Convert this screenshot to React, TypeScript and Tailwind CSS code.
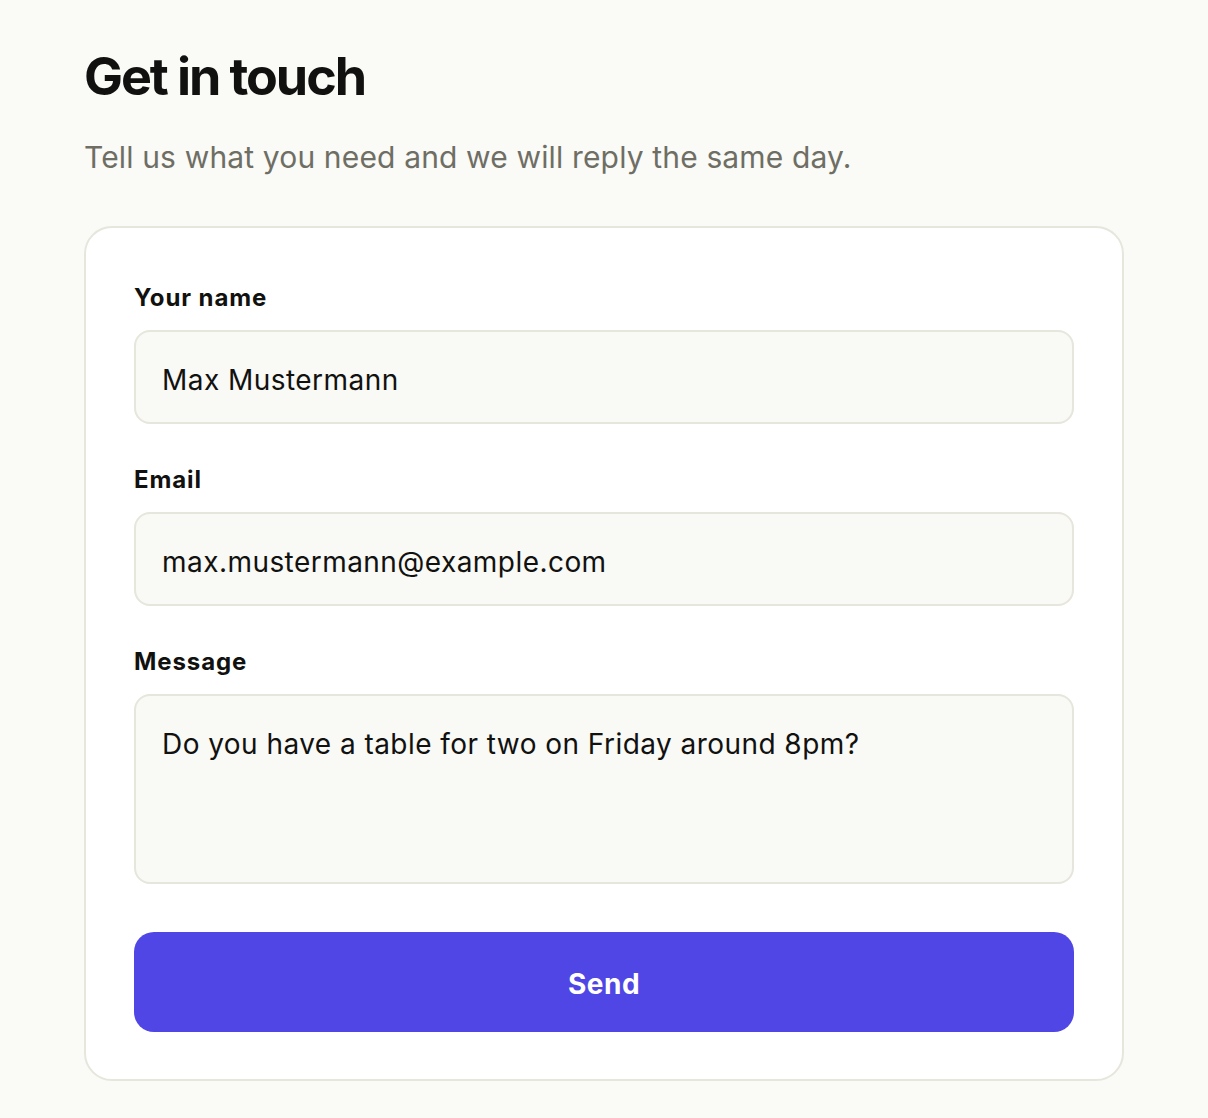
import { useState } from "react";

const fieldClass =
  "block w-full rounded-[16px] border-2 border-[#e6e6dd] bg-[#f9f9f5] px-[26px] pt-[27px] pb-[21px] text-[28px] leading-[42px] tracking-[0.45px] text-[#111110] outline-none";

const labelClass = "block text-[24px] font-bold leading-[40px] tracking-[0.9px] text-[#111110]";

export default function App() {
  const [name, setName] = useState("Max Mustermann");
  const [email, setEmail] = useState("max.mustermann@example.com");
  const [message, setMessage] = useState("Do you have a table for two on Friday around 8pm?");

  return (
    <div
      className="min-h-screen bg-[#fafaf7] px-[84px] pt-[46px] pb-[37px]"
      style={{ fontFamily: "Inter, 'Noto Sans', sans-serif" }}
    >
      <h1 className="text-[52px] font-bold leading-[62px] tracking-[-0.04em] text-[#111110]">
        Get in touch
      </h1>
      <p className="mt-[27px] text-[30px] leading-[45px] tracking-[0.15px] text-[#6e6e64]">
        Tell us what you need and we will reply the same day.
      </p>

      <form
        className="mt-[46px] rounded-[28px] border-2 border-[#e6e6dd] bg-white px-[48px] pt-[50px] pb-[47px]"
        onSubmit={(e) => e.preventDefault()}
      >
        <label className="block">
          <span className={labelClass}>Your name</span>
          <input
            className={`mt-[12px] h-[94px] ${fieldClass}`}
            value={name}
            onChange={(e) => setName(e.target.value)}
          />
        </label>

        <label className="mt-[36px] block">
          <span className={labelClass}>Email</span>
          <input
            className={`mt-[12px] h-[94px] ${fieldClass}`}
            value={email}
            onChange={(e) => setEmail(e.target.value)}
          />
        </label>

        <label className="mt-[36px] block">
          <span className={labelClass}>Message</span>
          <textarea
            className={`mt-[12px] h-[190px] resize-none ${fieldClass}`}
            value={message}
            onChange={(e) => setMessage(e.target.value)}
          />
        </label>

        <button
          type="submit"
          className="mt-[48px] block h-[100px] w-full rounded-[20px] bg-[#4f46e5] pt-[4px] text-[28px] font-bold tracking-[0.5px] text-white"
        >
          Send
        </button>
      </form>
    </div>
  );
}
